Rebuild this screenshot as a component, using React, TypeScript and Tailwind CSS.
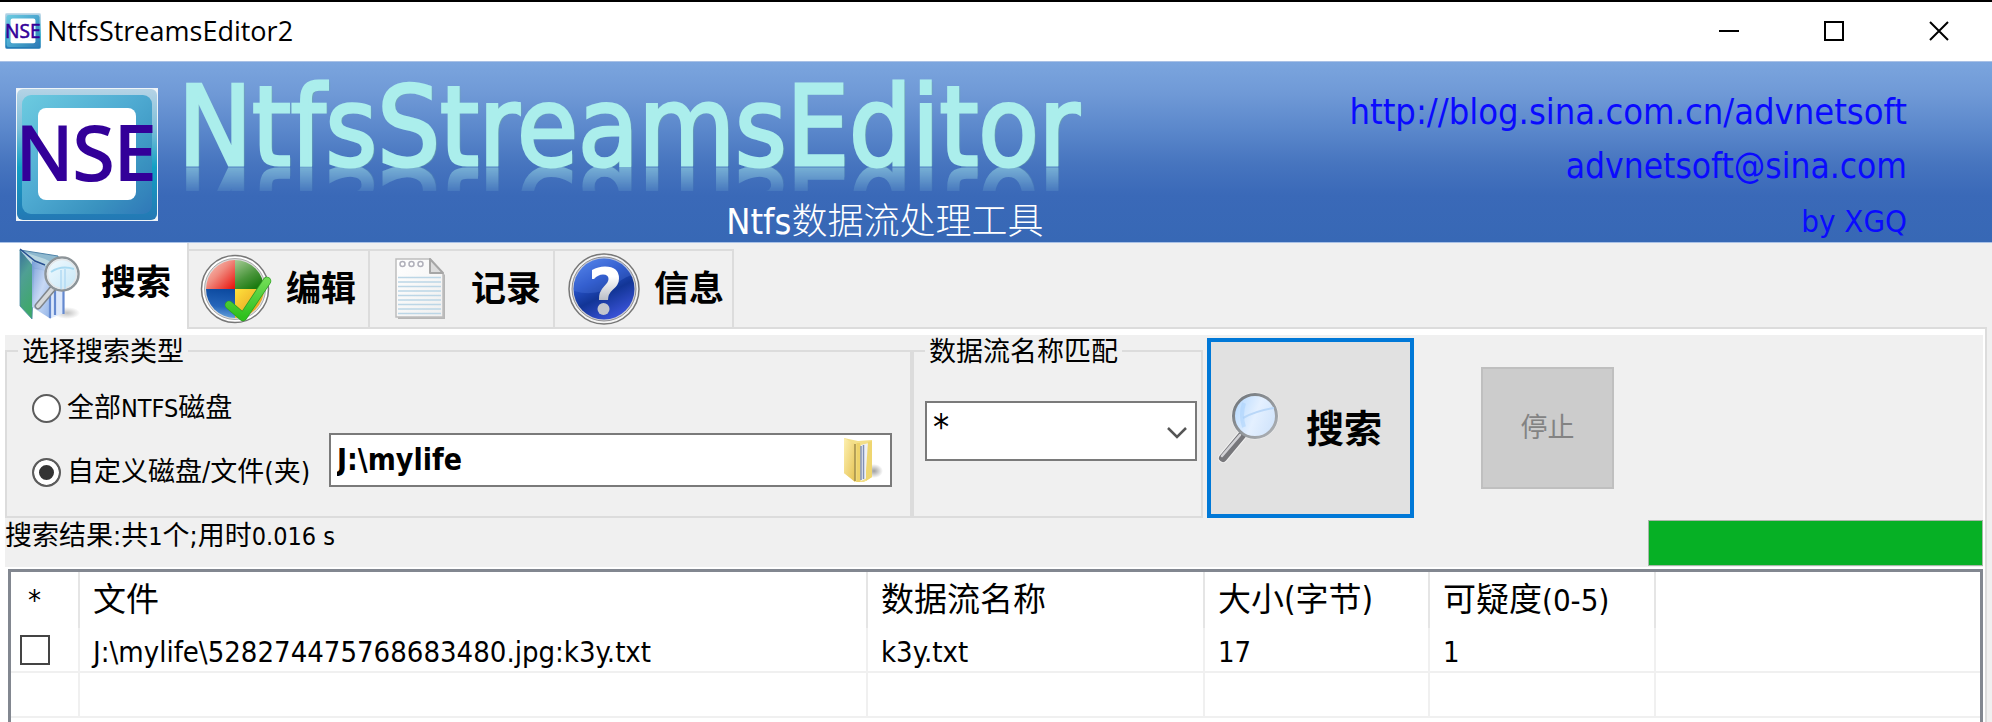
import type { ReactNode } from "react";

const UI_FONT = "font-['DejaVu_Sans_Condensed','Noto_Sans_CJK_SC',sans-serif]";

function AppLogo({ className, id }: { className: string; id: string }) {
  return (
    <svg viewBox="0 0 142 133" preserveAspectRatio="none" className={className} aria-hidden="true">
      <defs>
        <linearGradient id={`${id}-rim`} x1="0" y1="0" x2="0" y2="1">
          <stop offset="0" stopColor="#b5d3e6" />
          <stop offset="0.3" stopColor="#7fbfd9" />
          <stop offset="0.6" stopColor="#139fc4" />
          <stop offset="1" stopColor="#2478b4" />
        </linearGradient>
        <linearGradient id={`${id}-face`} x1="0" y1="0" x2="1" y2="1">
          <stop offset="0" stopColor="#6ccbe0" />
          <stop offset="0.45" stopColor="#4fabd2" />
          <stop offset="0.75" stopColor="#3a93c0" />
          <stop offset="1" stopColor="#2f78b8" />
        </linearGradient>
      </defs>
      <rect width="142" height="133" fill="#eef4f8" />
      <rect x="1" y="1" width="140" height="131" rx="6" fill={`url(#${id}-rim)`} />
      <rect x="6" y="7" width="130" height="119" rx="9" fill={`url(#${id}-face)`} />
      <rect x="22" y="20" width="98" height="92" rx="8" fill="#fff" />
      <text
        x="70"
        y="92"
        textAnchor="middle"
        fontFamily="Noto Sans, sans-serif"
        fontSize="75"
        fill="#330099"
        stroke="#330099"
        strokeWidth="2"
      >
        NSE
      </text>
    </svg>
  );
}

function SearchFolderIcon() {
  return (
    <svg viewBox="0 0 70 74" className="h-[74px] w-[70px]" aria-hidden="true">
      <defs>
        <linearGradient id="sf-green" x1="0" y1="0" x2="0.3" y2="1">
          <stop offset="0" stopColor="#3a6f9a" />
          <stop offset="0.4" stopColor="#4f9f94" />
          <stop offset="1" stopColor="#3fa86a" />
        </linearGradient>
        <linearGradient id="sf-blue" x1="0" y1="0" x2="1" y2="1">
          <stop offset="0" stopColor="#6f97d6" />
          <stop offset="0.5" stopColor="#c3d6f4" />
          <stop offset="1" stopColor="#86abe4" />
        </linearGradient>
        <linearGradient id="sf-lens" x1="0" y1="0" x2="1" y2="1">
          <stop offset="0" stopColor="#f4fbff" />
          <stop offset="1" stopColor="#c4e6f6" />
        </linearGradient>
        <radialGradient id="sf-shadow">
          <stop offset="0" stopColor="#999" stopOpacity="0.6" />
          <stop offset="1" stopColor="#999" stopOpacity="0" />
        </radialGradient>
      </defs>
      <ellipse cx="52" cy="66" rx="13" ry="6" fill="url(#sf-shadow)" />
      <path d="M5 3 L43 9 L43 26 L14 20Z" fill="#8fb9cf" stroke="#4f83a8" />
      <path d="M5 3 L19 20 L17 72 L5 59Z" fill="url(#sf-green)" stroke="#4a8aa5" strokeWidth="0.8" />
      <path d="M6 4 L30 12 L40 17 L20 21Z" fill="#b9d6e0" />
      <path d="M17 14 L36 22 L36 72 L17 60Z" fill="url(#sf-blue)" opacity="0.92" />
      <path d="M34 24 L49 15 L49 66 L34 72Z" fill="#dce8fb" />
      <path d="M35 40V71M40 38V68M48.500 30V67" stroke="#6489cf" strokeWidth="2.200" />
      <path d="M5 2 L20 14 L30 18" fill="none" stroke="#284f91" strokeWidth="1.500" />
      <path d="M39 40 L23 59" stroke="#80868b" strokeWidth="7" strokeLinecap="round" />
      <path d="M39 40 L23 59" stroke="#d5d8da" strokeWidth="4" strokeLinecap="round" />
      <circle cx="47" cy="27" r="16.500" fill="url(#sf-lens)" stroke="#8d9498" strokeWidth="2.500" />
      <circle cx="47" cy="27" r="14.500" fill="none" stroke="#e3e6e8" strokeWidth="1.500" />
      <path d="M36 25Q46 18 59 22" fill="none" stroke="#a8daf2" strokeWidth="2" />
      <path d="M46 23V42M50 22V42" stroke="#b2daf3" strokeWidth="1.500" />
    </svg>
  );
}

function EditIcon() {
  return (
    <svg viewBox="0 0 72 74" className="h-[74px] w-[72px]" aria-hidden="true">
      <defs>
        <linearGradient id="ed-red" x1="0" y1="0" x2="1" y2="1">
          <stop offset="0" stopColor="#f9d2c8" />
          <stop offset="0.45" stopColor="#f08c80" />
          <stop offset="1" stopColor="#e80e08" />
        </linearGradient>
        <linearGradient id="ed-green" x1="0" y1="0" x2="0.6" y2="1">
          <stop offset="0" stopColor="#a6cc96" />
          <stop offset="0.6" stopColor="#4b963c" />
          <stop offset="1" stopColor="#1b7a10" />
        </linearGradient>
        <linearGradient id="ed-yellow" x1="0" y1="0" x2="1" y2="1">
          <stop offset="0" stopColor="#ffe23c" />
          <stop offset="1" stopColor="#e28f1a" />
        </linearGradient>
        <linearGradient id="ed-blue" x1="0.5" y1="0" x2="0.4" y2="1">
          <stop offset="0" stopColor="#0c4aa0" />
          <stop offset="0.6" stopColor="#2565ba" />
          <stop offset="1" stopColor="#6aa5dc" />
        </linearGradient>
        <linearGradient id="ed-check" x1="0" y1="0" x2="0" y2="1">
          <stop offset="0" stopColor="#6fdc54" />
          <stop offset="1" stopColor="#2fc01d" />
        </linearGradient>
      </defs>
      <circle cx="35" cy="37" r="33.500" fill="#fff" stroke="#777" strokeWidth="1.500" />
      <circle cx="35" cy="37" r="30.500" fill="#ddd" stroke="#aaa" />
      <path d="M35 37H6A29 29 0 0 1 35 8Z" fill="url(#ed-red)" />
      <path d="M35 37V8A29 29 0 0 1 64 37Z" fill="url(#ed-green)" />
      <path d="M35 37H64A29 29 0 0 1 35 66Z" fill="url(#ed-yellow)" />
      <path d="M35 37V66A29 29 0 0 1 6 37Z" fill="url(#ed-blue)" />
      <path d="M29 53 L43 65 L67 29" fill="none" stroke="#2f9d25" strokeWidth="8.500" strokeLinecap="round" strokeLinejoin="round" />
      <path d="M29 53 L43 65 L67 29" fill="none" stroke="url(#ed-check)" strokeWidth="7" strokeLinecap="round" strokeLinejoin="round" />
    </svg>
  );
}

function NotepadIcon() {
  return (
    <svg viewBox="0 0 54 64" className="h-16 w-[54px]" aria-hidden="true">
      <defs>
        <linearGradient id="np-paper" x1="0" y1="0" x2="1" y2="1">
          <stop offset="0" stopColor="#fff" />
          <stop offset="1" stopColor="#efefef" />
        </linearGradient>
      </defs>
      <path d="M4 4H38L51 18V62H4Z" fill="#9d9d9d" opacity="0.7" />
      <path d="M2 2H36L49 17V60H2Z" fill="url(#np-paper)" stroke="#bdbdbd" strokeWidth="1.500" />
      <path d="M36 2V16H49Z" fill="#dcdcdc" stroke="#a6a6a6" strokeWidth="2" strokeLinejoin="round" />
      <g fill="#fff" stroke="#b0b0ba" strokeWidth="1.500">
        <circle cx="8.500" cy="7" r="2.500" />
        <circle cx="17.500" cy="7" r="2.500" />
        <circle cx="26.500" cy="7" r="2.500" />
      </g>
      <path d="M4 20.500H47M4 25H47M4 29.500H47M4 34H47M4 38.500H47M4 43H47M4 47.500H47M4 52H47M4 56.500H47" stroke="#bcd6e6" strokeWidth="1.500" />
    </svg>
  );
}

function HelpIcon() {
  return (
    <svg viewBox="0 0 74 74" className="h-[74px] w-[74px]" aria-hidden="true">
      <defs>
        <linearGradient id="hp-ball" x1="0.2" y1="0" x2="0.7" y2="1">
          <stop offset="0" stopColor="#4f7fe6" />
          <stop offset="0.35" stopColor="#2550c4" />
          <stop offset="0.6" stopColor="#123596" />
          <stop offset="1" stopColor="#3d55dd" />
        </linearGradient>
        <linearGradient id="hp-mark" x1="0" y1="0" x2="0" y2="1">
          <stop offset="0.3" stopColor="#fff" />
          <stop offset="1" stopColor="#b9bdc6" />
        </linearGradient>
      </defs>
      <circle cx="37" cy="37" r="35" fill="#f4f4f4" stroke="#777" strokeWidth="1.500" />
      <circle cx="37" cy="37" r="32" fill="#d0d0d4" stroke="#8d8d92" />
      <circle cx="37" cy="37" r="30.500" fill="url(#hp-ball)" />
      <path d="M7 39Q30 46 50 31Q60 24 65 23A30.500 30.500 0 0 0 7 35Z" fill="#5f8df0" opacity="0.25" />
      <path
        d="M25 18Q31 14.500 38 14.500Q52 14.500 52 26.500Q52 33 45.500 38Q41 42 41 48H32Q31.500 40 37 34.500Q41.500 30 41.500 27Q41.500 22.500 36 22.500Q31 22.500 27 27H25Z"
        fill="url(#hp-mark)"
      />
      <circle cx="36.500" cy="57" r="6" fill="#c3c6ce" />
    </svg>
  );
}

function FolderIcon() {
  return (
    <svg viewBox="0 0 42 46" className="h-[46px] w-[42px]" aria-hidden="true">
      <defs>
        <linearGradient id="fd-front" x1="0" y1="0" x2="1" y2="1">
          <stop offset="0" stopColor="#fdf0b0" />
          <stop offset="1" stopColor="#e5c253" />
        </linearGradient>
        <radialGradient id="fd-shadow">
          <stop offset="0" stopColor="#777" stopOpacity="0.7" />
          <stop offset="1" stopColor="#777" stopOpacity="0" />
        </radialGradient>
      </defs>
      <ellipse cx="32" cy="34" rx="9" ry="7" fill="url(#fd-shadow)" />
      <path d="M2 1L16 4L30 3V40L22 45L14 45L2 36Z" fill="#f3df88" />
      <path d="M19 8L27 6V40L19 44Z" fill="#eef0f6" />
      <path d="M19 9V43M21.500 8V42" stroke="#8090b4" strokeWidth="1.500" />
      <path d="M2 1L13 7V45L2 36Z" fill="url(#fd-front)" />
      <path d="M13 7V44" stroke="#a18d4b" strokeWidth="1.500" />
      <path d="M14.500 6H18V45H14.500Z" fill="#edd26a" />
      <path d="M26 5L30 4V40L24 44L24 34Z" fill="#efd670" />
    </svg>
  );
}

function MagnifierIcon() {
  return (
    <svg viewBox="0 0 64 74" className="h-[74px] w-16" aria-hidden="true">
      <defs>
        <linearGradient id="mg-lens" x1="0" y1="0.3" x2="1" y2="0.7">
          <stop offset="0" stopColor="#b9dbff" />
          <stop offset="0.5" stopColor="#e4f0ff" />
          <stop offset="1" stopColor="#cfe3fb" />
        </linearGradient>
        <linearGradient id="mg-rim" x1="0" y1="0" x2="1" y2="1">
          <stop offset="0" stopColor="#6f7479" />
          <stop offset="1" stopColor="#b0b4b8" />
        </linearGradient>
      </defs>
      <path d="M27 43L7 67" stroke="#f0f0f0" strokeWidth="10" strokeLinecap="round" />
      <circle cx="39" cy="25" r="23.500" fill="#f0f0f0" />
      <path d="M27 43L7 67" stroke="#77777b" strokeWidth="8" strokeLinecap="round" />
      <path d="M24 44L6 65" stroke="#d2d2d6" strokeWidth="2.500" strokeLinecap="round" />
      <circle cx="39" cy="25" r="21.500" fill="url(#mg-lens)" stroke="url(#mg-rim)" strokeWidth="3" />
      <path d="M27 27Q40 20 58 17" fill="none" stroke="#b9d7f8" strokeWidth="2" />
      <path d="M28 12Q24 24 28 36" fill="none" stroke="#a6cffb" strokeWidth="4" opacity="0.5" />
    </svg>
  );
}

function TitleBar() {
  return (
    <header className="flex h-[61px] items-center justify-between border-t-2 border-black bg-white pr-px pb-0.5 pl-[5px]">
      <div className="flex items-center gap-1.5">
        <AppLogo id="small" className="h-9 w-9" />
        <span className="font-['Open_Sans',sans-serif] text-[27px] leading-9 text-black">NtfsStreamsEditor2</span>
      </div>
      <div className="flex items-center">
        <button type="button" aria-label="最小化" className="flex h-14 w-[105px] items-center justify-center">
          <svg viewBox="0 0 20 20" className="size-5" aria-hidden="true">
            <path d="M0 10H20" stroke="#000" strokeWidth="2" />
          </svg>
        </button>
        <button type="button" aria-label="最大化" className="flex h-14 w-[105px] items-center justify-center">
          <svg viewBox="0 0 20 20" className="size-5" aria-hidden="true">
            <path d="M1 1H19V19H1Z" fill="none" stroke="#000" strokeWidth="2" />
          </svg>
        </button>
        <button type="button" aria-label="关闭" className="flex h-14 w-[105px] items-center justify-center">
          <svg viewBox="0 0 20 20" className="size-5" aria-hidden="true">
            <path d="M1 1L19 19M19 1L1 19" stroke="#000" strokeWidth="2" />
          </svg>
        </button>
      </div>
    </header>
  );
}

function Banner() {
  return (
    <div
      className={`flex h-[182px] items-start overflow-hidden border-y border-[#a9c1e6] bg-[linear-gradient(#7ba5de_0%,#6f99d6_18%,#5a87cb_38%,#4775bf_56%,#3a69b8_74%,#3768b5_100%)] pl-4 ${UI_FONT}`}
    >
      <AppLogo id="large" className="mt-[26px] h-[133px] w-[142px] shrink-0" />
      <div className="ml-5 flex shrink-0 flex-col items-end">
        <h1 className="text-[110px] leading-[130px] text-[#abeeec] [-webkit-box-reflect:below_-50px_linear-gradient(transparent_62%,rgba(255,255,255,0.1)_62%,rgba(255,255,255,0.5)_81%)] [-webkit-text-stroke:3px_#abeeec] [text-shadow:2px_1px_1px_#6fa9ab]">
          NtfsStreamsEditor
        </h1>
        <p className="mt-2 mr-9 text-[36px] leading-[44px] font-light text-white">Ntfs数据流处理工具</p>
      </div>
      <div className="ml-auto flex flex-col items-end pt-[22px] pr-[85px] text-[35px] leading-[55px] whitespace-nowrap text-[#0a0aff]">
        <a href="http://blog.sina.com.cn/advnetsoft" className="text-[36px]">
          http://blog.sina.com.cn/advnetsoft
        </a>
        <a href="mailto:advnetsoft@sina.com">advnetsoft@sina.com</a>
        <span className="text-[31px]">by XGQ</span>
      </div>
    </div>
  );
}

function InactiveTab({ icon, label, width }: { icon: ReactNode; label: string; width: string }) {
  return (
    <button
      type="button"
      role="tab"
      aria-selected={false}
      className={`flex h-20 items-center justify-between border-2 border-l-0 border-[#dcdcdc] ${width}`}
    >
      {icon}
      <span className="text-[35px] leading-10 font-bold">{label}</span>
    </button>
  );
}

function Tabs() {
  return (
    <div role="tablist" className="mr-[5px] flex h-[86px] items-end">
      <button
        type="button"
        role="tab"
        aria-selected={true}
        className="flex h-full w-[189px] shrink-0 items-start justify-end border-r-2 border-[#dcdcdc] bg-white pt-1 pr-4"
      >
        <SearchFolderIcon />
        <span className="mt-4 ml-4 text-[35px] leading-10 font-bold">搜索</span>
      </button>
      <InactiveTab icon={<EditIcon />} label="编辑" width="w-[181px] pr-3 pl-[11px]" />
      <InactiveTab icon={<NotepadIcon />} label="记录" width="w-[185px] pr-3 pl-6" />
      <InactiveTab icon={<HelpIcon />} label="信息" width="w-[179px] pr-2 pl-3" />
      <div className="h-20 flex-1 border-b-2 border-[#dcdcdc]" />
    </div>
  );
}

const RADIO =
  "size-[29px] shrink-0 appearance-none rounded-full border-2 border-[#5c5c5c] bg-white checked:bg-[#333] checked:shadow-[inset_0_0_0_5px_#fff]";

function SearchForm() {
  return (
    <div className="flex h-[183px]">
      <fieldset className="w-[907px] shrink-0 border-2 border-[#dcdcdc] pl-[25px]">
        <legend className="-ml-3.5 px-1 pt-0.5 text-[27px] leading-[30px]">选择搜索类型</legend>
        <label className="mt-[26px] flex h-[30px] w-fit items-center gap-1.5 text-[27px] leading-[30px]">
          <input type="radio" name="scope" className={RADIO} />
          <span>
            全部<span className="text-[25px]">NTFS</span>磁盘
          </span>
        </label>
        <div className="mt-2.5 flex items-end">
          <label className="flex h-[30px] w-[297px] shrink-0 items-center gap-1.5 text-[27px] leading-[30px] whitespace-nowrap">
            <input type="radio" name="scope" defaultChecked className={RADIO} />
            自定义磁盘/文件(夹)
          </label>
          <div className="mr-[18px] flex h-[54px] flex-1 items-center border-2 border-[#7a7a7a] bg-white pr-1.5">
            <input
              type="text"
              aria-label="路径"
              defaultValue="J:\mylife"
              className="h-full min-w-0 flex-1 bg-transparent pb-0.5 pl-1.5 text-[30px] font-bold text-black outline-none"
            />
            <button type="button" aria-label="浏览文件夹">
              <FolderIcon />
            </button>
          </div>
        </div>
      </fieldset>

      <fieldset className="w-[291px] shrink-0 border-2 border-[#dcdcdc] pr-1 pl-[11px]">
        <legend className="px-1 pt-0.5 text-[27px] leading-[30px]">数据流名称匹配</legend>
        <div className="relative mt-[34px]">
          <select
            aria-label="数据流名称匹配"
            defaultValue="*"
            className="h-[60px] w-full appearance-none border-2 border-[#7a7a7a] bg-white pb-2 pl-1.5 text-[36px] leading-8 text-black"
          >
            <option value="*">*</option>
          </select>
          <svg viewBox="0 0 20 12" className="pointer-events-none absolute top-[26px] right-2.5 h-3 w-5" aria-hidden="true">
            <path d="M1 1L10 10L19 1" fill="none" stroke="#555" strokeWidth="2.500" />
          </svg>
        </div>
      </fieldset>

      <button
        type="submit"
        className="mt-[3px] ml-1 flex h-[180px] w-[207px] shrink-0 items-center border-4 border-[#0078d7] bg-[#e1e1e1] pl-[5px]"
      >
        <MagnifierIcon />
        <span className="mt-0.5 ml-[26px] text-[38px] leading-10 font-bold">搜索</span>
      </button>
      <button
        type="button"
        disabled
        className="mt-8 ml-[67px] h-[122px] w-[133px] border-2 border-[#bfbfbf] bg-[#ccc] text-[27px] text-[#838383]"
      >
        停止
      </button>
    </div>
  );
}

function StatusRow() {
  return (
    <div className="flex h-[49px] items-start justify-between pt-0.5">
      <output className="text-[27px] leading-8">
        搜索结果:共<span className="text-[25px]">1</span>个;用时<span className="text-[25px]">0.016 s</span>
      </output>
      <div
        role="progressbar"
        aria-label="搜索进度"
        aria-valuenow={100}
        className="h-[46px] w-[335px] border border-[#a8b8a8] bg-[#06b025]"
      />
    </div>
  );
}

const HEAD_CELL = "border-r-2 border-[#e5e5e5] pl-[13px] text-left text-[33px] leading-10 font-normal";
const BODY_CELL = "border-r-2 border-b-2 border-[#f0f0f0] pt-1 pl-[13px] text-[29px] leading-9";

function ResultTable() {
  return (
    <div className="mt-[2px] mr-[2px] ml-[3px] flex-1 border-x-[3px] border-t-[3px] border-[#828790] bg-white">
      <table className="w-full table-fixed border-separate border-spacing-0 text-black">
        <colgroup>
          <col className="w-[69px]" />
          <col className="w-[788px]" />
          <col className="w-[337px]" />
          <col className="w-[225px]" />
          <col className="w-[226px]" />
          <col />
        </colgroup>
        <thead>
          <tr className="h-[56px]">
            <th className="border-r-2 border-[#e5e5e5] pr-5 text-center text-[29px] leading-10 font-normal">*</th>
            <th className={HEAD_CELL}>文件</th>
            <th className={HEAD_CELL}>数据流名称</th>
            <th className={HEAD_CELL}>大小(字节)</th>
            <th className={HEAD_CELL}>
              可疑度<span className="text-[31px]">(0-5)</span>
            </th>
            <th />
          </tr>
        </thead>
        <tbody>
          <tr className="h-[45px]">
            <td className="border-r-2 border-b-2 border-[#f0f0f0] pl-[9px]">
              <input
                type="checkbox"
                aria-label="选择 k3y.txt"
                className="block size-[30px] appearance-none border-2 border-[#444] bg-white checked:bg-[#444]"
              />
            </td>
            <td className={BODY_CELL}>J:\mylife\528274475768683480.jpg:k3y.txt</td>
            <td className={BODY_CELL}>k3y.txt</td>
            <td className={BODY_CELL}>17</td>
            <td className={BODY_CELL}>1</td>
            <td className="border-b-2 border-[#f0f0f0]" />
          </tr>
          <tr className="h-[45px]">
            <td className={BODY_CELL} />
            <td className={BODY_CELL} />
            <td className={BODY_CELL} />
            <td className={BODY_CELL} />
            <td className={BODY_CELL} />
            <td className="border-b-2 border-[#f0f0f0]" />
          </tr>
        </tbody>
      </table>
    </div>
  );
}

export default function App() {
  return (
    <div className={`flex min-h-screen flex-col bg-[#f0f0f0] text-black ${UI_FONT}`}>
      <TitleBar />
      <Banner />
      <Tabs />
      <main className="mr-[5px] flex flex-1 flex-col border-r-2 border-[#dcdcdc] bg-white pt-1.5 pl-[5px]">
        <div className="mr-0.5 bg-[#f0f0f0]">
          <SearchForm />
          <StatusRow />
        </div>
        <ResultTable />
      </main>
    </div>
  );
}
